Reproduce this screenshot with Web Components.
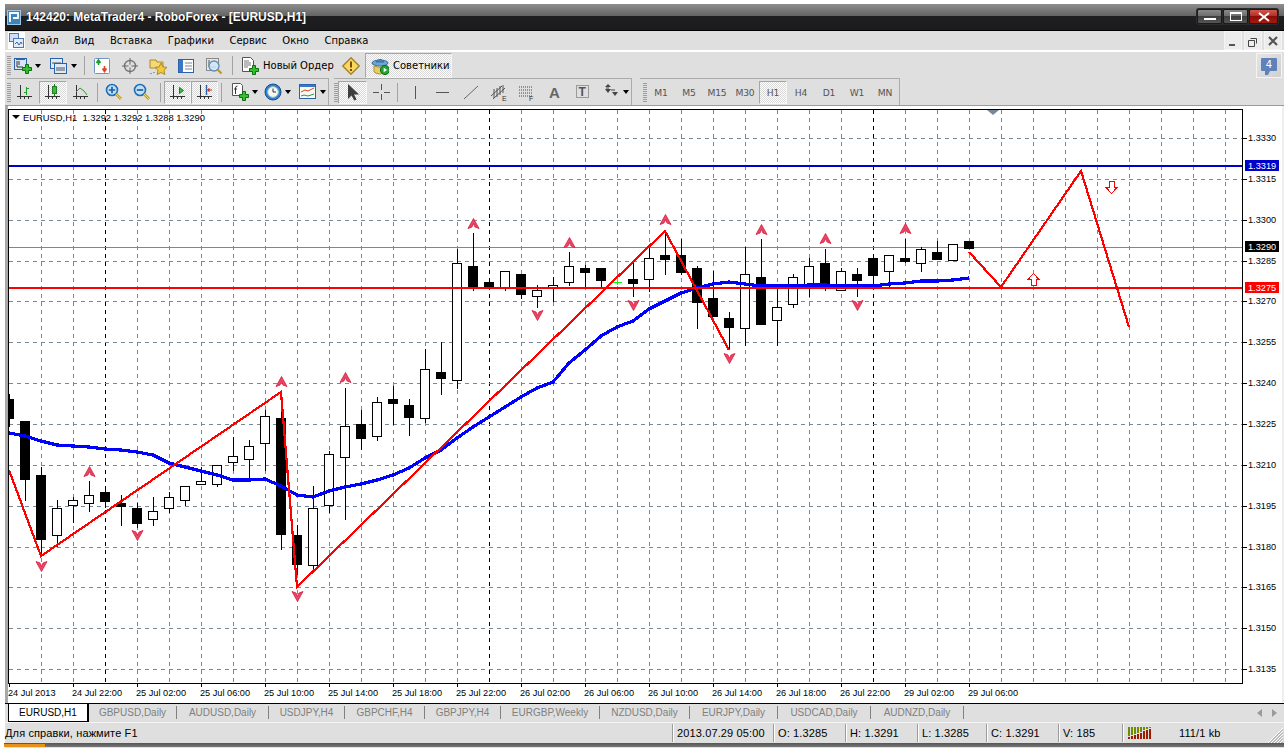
<!DOCTYPE html>
<html>
<head>
<meta charset="utf-8">
<title>MetaTrader4</title>
<style>
  html, body { margin: 0; padding: 0; background: #fff; overflow: hidden; }
  body { font: 11px "Liberation Sans", sans-serif; color: #000; }
</style>
</head>
<body>
<mt-window>
  <mt-titlebar title="142420: MetaTrader4 - RoboForex - [EURUSD,H1]"></mt-titlebar>
  <mt-menubar>
    <span>Файл</span><span>Вид</span><span>Вставка</span><span>Графики</span><span>Сервис</span><span>Окно</span><span>Справка</span>
  </mt-menubar>
  <mt-toolrow top>
    <mt-toolbar>
      <tb-btn w="32" pad="3"><mt-icon name="newchart"></mt-icon><tb-caret></tb-caret></tb-btn>
      <tb-btn w="33" pad="7"><mt-icon name="profiles"></mt-icon><tb-caret></tb-caret></tb-btn>
      <tb-sep w="12" at="8"></tb-sep>
      <tb-btn w="28"><mt-icon name="market"></mt-icon></tb-btn>
      <tb-btn w="28"><mt-icon name="navigator"></mt-icon></tb-btn>
      <tb-btn w="28"><mt-icon name="favorites"></mt-icon></tb-btn>
      <tb-btn w="28"><mt-icon name="terminal"></mt-icon></tb-btn>
      <tb-btn w="28"><mt-icon name="tester"></mt-icon></tb-btn>
      <tb-sep w="8" at="4"></tb-sep>
      <tb-btn w="101" pad="5"><mt-icon name="order"></mt-icon><tb-label>Новый Ордер</tb-label></tb-btn>
      <tb-btn w="28"><mt-icon name="warning"></mt-icon></tb-btn>
      <tb-btn w="87" pad="5" active><mt-icon name="advisor"></mt-icon><tb-label>Советники</tb-label></tb-btn>
    </mt-toolbar>
    <mt-notify count="4"></mt-notify>
  </mt-toolrow>
  <mt-toolrow>
    <mt-toolbar end mr="5">
      <tb-btn w="28"><mt-icon name="bars"></mt-icon></tb-btn>
      <tb-btn w="28" active><mt-icon name="candles"></mt-icon></tb-btn>
      <tb-btn w="28"><mt-icon name="line"></mt-icon></tb-btn>
      <tb-sep w="5" at="2"></tb-sep>
      <tb-btn w="28"><mt-icon name="zoomin"></mt-icon></tb-btn>
      <tb-btn w="28"><mt-icon name="zoomout"></mt-icon></tb-btn>
      <tb-sep w="8" at="4"></tb-sep>
      <tb-btn w="27" active><mt-icon name="shift"></mt-icon></tb-btn>
      <tb-btn w="27" active><mt-icon name="autoscroll"></mt-icon></tb-btn>
      <tb-sep w="8" at="3"></tb-sep>
      <tb-btn w="33" pad="5"><mt-icon name="indicators"></mt-icon><tb-caret></tb-caret></tb-btn>
      <tb-btn w="35" pad="5"><mt-icon name="clock"></mt-icon><tb-caret></tb-caret></tb-btn>
      <tb-btn w="34" pad="5"><mt-icon name="template"></mt-icon><tb-caret></tb-caret></tb-btn>
    </mt-toolbar>
    <mt-toolbar end mr="8">
      <tb-btn w="29" active><mt-icon name="cursor"></mt-icon></tb-btn>
      <tb-btn w="28"><mt-icon name="cross"></mt-icon></tb-btn>
      <tb-sep w="6" at="2"></tb-sep>
      <tb-btn w="28"><mt-icon name="vline"></mt-icon></tb-btn>
      <tb-btn w="28"><mt-icon name="hline"></mt-icon></tb-btn>
      <tb-btn w="28"><mt-icon name="trend"></mt-icon></tb-btn>
      <tb-btn w="28"><mt-icon name="channel"></mt-icon></tb-btn>
      <tb-btn w="28"><mt-icon name="fibo"></mt-icon></tb-btn>
      <tb-btn w="28"><mt-icon name="text"></mt-icon></tb-btn>
      <tb-btn w="28"><mt-icon name="label"></mt-icon></tb-btn>
      <tb-btn w="34" pad="5"><mt-icon name="arrows"></mt-icon><tb-caret></tb-caret></tb-btn>
    </mt-toolbar>
    <mt-toolbar end ml="3">
      <tb-btn w="28" tf>M1</tb-btn><tb-btn w="28" tf>M5</tb-btn><tb-btn w="28" tf>M15</tb-btn><tb-btn w="28" tf>M30</tb-btn>
      <tb-btn w="28" tf active>H1</tb-btn><tb-btn w="28" tf>H4</tb-btn><tb-btn w="28" tf>D1</tb-btn><tb-btn w="28" tf>W1</tb-btn><tb-btn w="28" tf>MN</tb-btn>
    </mt-toolbar>
  </mt-toolrow>
  <mt-chart></mt-chart>
  <mt-tabs>
    <mt-tab active w="81">EURUSD,H1</mt-tab>
    <mt-tab w="88">GBPUSD,Daily</mt-tab>
    <mt-tab w="92">AUDUSD,Daily</mt-tab>
    <mt-tab w="76">USDJPY,H4</mt-tab>
    <mt-tab w="80">GBPCHF,H4</mt-tab>
    <mt-tab w="76">GBPJPY,H4</mt-tab>
    <mt-tab w="99">EURGBP,Weekly</mt-tab>
    <mt-tab w="90">NZDUSD,Daily</mt-tab>
    <mt-tab w="88">EURJPY,Daily</mt-tab>
    <mt-tab w="93">USDCAD,Daily</mt-tab>
    <mt-tab w="93">AUDNZD,Daily</mt-tab>
  </mt-tabs>
  <mt-status>
    <mt-cell grow>Для справки, нажмите F1</mt-cell>
    <mt-cell w="101" sep>2013.07.29 05:00</mt-cell>
    <mt-cell w="72" sep>O: 1.3285</mt-cell>
    <mt-cell w="72" sep>H: 1.3291</mt-cell>
    <mt-cell w="69" sep>L: 1.3285</mt-cell>
    <mt-cell w="72" sep>C: 1.3291</mt-cell>
    <mt-cell w="64" sep>V: 185</mt-cell>
    <mt-cell w="162" sep><mt-traffic></mt-traffic></mt-cell>
  </mt-status>
</mt-window>

<script>
const UI_FONT = '"DejaVu Sans", sans-serif';
const LATIN_FONT = '"Liberation Sans", sans-serif';

// axes used by the chart type icons
const AXES = `<path d="M4.5 2v14M1 13.5h15" stroke="#333" fill="none"/><path d="M8.5 13v3M12.5 13v3" stroke="#333"/>`;
const PLUS = (x, y) => `<path transform="translate(${x} ${y})" d="M3.5 .5h3v3h3v3h-3v3h-3v-3h-3v-3h3z" fill="#35c02e" stroke="#0d6e12"/>`;
const LENS = (inner) => `<circle cx="7" cy="7" r="5.5" fill="#bfe0f7" stroke="#1f6fb5" stroke-width="1.6"/>${inner}<path d="M11 11l5 5" stroke="#c79a1e" stroke-width="2.6"/><path d="M11 11l5 5" stroke="#f2d766" stroke-width="1"/>`;

const ICONS = {
  newchart: `<rect x=".5" y="1.5" width="12" height="11" fill="#d8e5f7" stroke="#2b62ae"/><path d="M2 2.5h9" stroke="#2b62ae"/><path d="M3 4v6h6M5 4v4" stroke="#333" fill="none"/>${PLUS(8, 7)}`,
  profiles: `<rect x=".5" y="1.5" width="12" height="10" fill="#dfe9f8" stroke="#2b62ae"/><path d="M2 6h9" stroke="#555"/><rect x="4.5" y="6.5" width="12" height="10" fill="#dfe9f8" stroke="#2b62ae"/><path d="M6 11h9M6 13h9" stroke="#555"/>`,
  market: `<rect x="1.5" y="1.5" width="15" height="15" rx="1" fill="#fff" stroke="#6f93c4"/><path d="M5.5 8V4M3.5 6l2-3 2 3" stroke="#1a9c28" stroke-width="1.6" fill="none"/><path d="M11.5 9v5M9.5 11.5l2 3 2-3" stroke="#e0431f" stroke-width="1.6" fill="none"/>`,
  navigator: `<circle cx="9" cy="9" r="5.5" fill="none" stroke="#777" stroke-width="1.4"/><path d="M9 1v16M1 9h16" stroke="#666"/><circle cx="9" cy="9" r="1.6" fill="#dfdfdf"/>`,
  favorites: `<path d="M1 3h6l1 2h6v6H1z" fill="#f6d877" stroke="#a98a2b"/><path d="M2 16v1M5 15v1" stroke="#555"/><path d="M12 6l1.9 3.9 4.1.5-3 2.9.8 4.2-3.8-2-3.8 2 .8-4.2-3-2.9 4.1-.5z" fill="#f4c93a" stroke="#a98a2b"/>`,
  terminal: `<rect x="1.5" y="2.5" width="15" height="13" fill="#fff" stroke="#2b62ae"/><rect x="2" y="3" width="4" height="12" fill="#3a78c6"/><path d="M8 6h7M8 9h7M8 12h7" stroke="#7d8590"/>`,
  tester: `<rect x="1.5" y="1.5" width="12" height="12" fill="#e7e7e7" stroke="#8a8a8a"/><path d="M4 3v7h7" stroke="#555" fill="none"/><circle cx="9" cy="9" r="5" fill="#cfe6f7" fill-opacity=".85" stroke="#5f8fb8" stroke-width="1.3"/><path d="M12.5 12.5l4 4" stroke="#c79a1e" stroke-width="2.4"/>`,
  order: `<path d="M1.5 .5h8l3 3v11h-11z" fill="#fff" stroke="#555"/><path d="M3 4h5M3 6h7M3 8h7M3 10h4" stroke="#777"/>${PLUS(8, 8)}`,
  warning: `<path d="M9 .8L17.2 9 9 17.2.8 9z" fill="#f7d95e" stroke="#a8812a" stroke-width="1.4"/><path d="M9 4.5v6" stroke="#7a4c08" stroke-width="2"/><path d="M9 12v2" stroke="#7a4c08" stroke-width="2"/>`,
  advisor: `<ellipse cx="9" cy="6" rx="8" ry="3" fill="#6aa6d8" stroke="#346e9c"/><path d="M5 5q4-5 8 0z" fill="#4e8cc4" stroke="#346e9c"/><path d="M3 9q6 3 11 0v6q-5 4-11 0z" fill="#e6cf62" stroke="#a8923a"/><circle cx="14" cy="13" r="4.6" fill="#22a52e" stroke="#0f6a16"/><path d="M12.7 10.8v4.4l3.4-2.2z" fill="#fff"/>`,
  bars: `${AXES}<path d="M10.5 4v8M8 9.5h2M11 5.5h2" stroke="#1d9c25" fill="none"/>`,
  candles: `${AXES}<path d="M10.5 1v12" stroke="#1d7c25"/><rect x="8.5" y="3.5" width="4" height="7" fill="#35c02e" stroke="#1d7c25"/>`,
  line: `${AXES}<path d="M4 9l4-4 4 3 3 4" stroke="#2aa032" fill="none"/>`,
  zoomin: LENS(`<path d="M7 3.8v6.4M3.8 7h6.4" stroke="#1f5fa0" stroke-width="1.7"/>`),
  zoomout: LENS(`<path d="M3.8 7h6.4" stroke="#1f5fa0" stroke-width="1.7"/>`),
  shift: `${AXES}<path d="M10.5 4.5v6l4-3z" fill="#35c02e" stroke="#1d7c25"/>`,
  autoscroll: `${AXES}<path d="M10.5 2v10" stroke="#2b62ae" stroke-width="1.4"/><path d="M16 7h-3M13 5.5L11.5 7l1.5 1.5z" stroke="#d3281c" fill="#d3281c"/>`,
  indicators: `<path d="M1.5 .5h8l2 2v10h-10z" fill="#fff" stroke="#555"/><path d="M6.5 3q-2 0-2 2v6M3 6h3" stroke="#333" fill="none"/>${PLUS(8, 8)}`,
  clock: `<circle cx="9" cy="9" r="8" fill="#2f7fd0" stroke="#174f8f"/><circle cx="9" cy="9" r="5.4" fill="#f4f7f2" stroke="#9bb"/><path d="M9 5.5V9h3" stroke="#333" fill="none"/>`,
  template: `<rect x=".5" y="1.5" width="16" height="14" fill="#f8f8f4" stroke="#2b62ae"/><rect x="1" y="2" width="15" height="2" fill="#3a78c6"/><path d="M2 9l4-2 3 1 6-3" stroke="#d3481c" fill="none"/><path d="M2 13l3-1 4 1 6-2" stroke="#2a9c32" fill="none"/>`,
  cursor: `<path d="M4 1v15l3.6-3.4 2.6 5 2.4-1.2-2.6-5h5z" fill="#3d3d3d"/>`,
  cross: `<path d="M9.5 1v6M9.5 11v6M1 9.5h6M12 9.5h6" stroke="#555"/>`,
  vline: `<path d="M9.5 3v13" stroke="#555"/>`,
  hline: `<path d="M2 9.5h13" stroke="#555"/>`,
  trend: `<path d="M2 16L16 3" stroke="#666"/>`,
  channel: `<path d="M1 13L12 3M3 16L15 5M4 6v9M7 5v9M10 3v9M13 2v8" stroke="#555"/><text x="12" y="18" font-size="7" font-family="Liberation Sans" fill="#333">E</text>`,
  fibo: `<path d="M1 4h13M1 7h13M1 10h13M1 13h13" stroke="#444" stroke-dasharray="1 1"/><text x="11" y="18" font-size="7" font-family="Liberation Sans" fill="#333">F</text>`,
  text: `<text x="3" y="15" font-size="15" font-weight="bold" font-family="Liberation Sans" fill="#666">A</text>`,
  label: `<rect x="2.5" y="2.5" width="12" height="12" fill="none" stroke="#555" stroke-dasharray="1 1"/><text x="4.5" y="13" font-size="12" font-weight="bold" font-family="Liberation Sans" fill="#555">T</text>`,
  arrows: `<path d="M6 1l3 3H3zM3 6l3 4 3-4" fill="#444"/><path d="M10 9h6l-3 4z" fill="#444"/><path d="M4 5h3M9 7h4" stroke="#444"/>`
};

class MtWindow extends HTMLElement {
  connectedCallback() {
    this.attachShadow({ mode: "open" });
    this.shadowRoot.innerHTML = `
      <style>
        :host { display: flex; flex-direction: column; margin: 4px 4px 0 5px; height: 744px; background: #dfdfdf; font-family: ${UI_FONT}; font-size: 10px; }
        .foot { display: flex; height: 4px; background: linear-gradient(#555, #777); margin-left: -1px; }
        .foot i { display: block; width: 41px; height: 3px; background: #e8901a; margin-top: 1px; }
      </style>
      <slot></slot>
      <div class="foot"><i></i></div>
    `;
  }
}

class MtTitlebar extends HTMLElement {
  connectedCallback() {
    this.attachShadow({ mode: "open" });
    const title = this.getAttribute("title") || "";
    this.removeAttribute("title");
    this.shadowRoot.innerHTML = `
      <style>
        :host { display: flex; align-items: center; height: 26px; border-bottom: 1px solid #000; padding: 0 5px 0 2px; gap: 5px;
          background: linear-gradient(#8e8e8e, #636363 46%, #1f1f21 46%, #1b1b1d); color: #fff; }
        .logo { width: 14px; height: 15px; }
        .text { font: bold 12px "Liberation Sans", sans-serif; text-shadow: 0 0 1px #000; flex: 1; }
        .btns { display: flex; gap: 1px; padding: 1px; margin-top: -1px; background: #2a2a2a; border-radius: 3px; }
        .b { width: 23px; height: 13px; display: flex; align-items: center; justify-content: center; border-radius: 2px; background: linear-gradient(#8a8a8a, #6b6b6b 50%, #3f3f3f 50%, #555); border: 1px solid #1a1a1a; }
        .close { width: 27px; background: linear-gradient(#cc5a50, #b32a20 50%, #8a0d08 50%, #a81a10); }
      </style>
      <svg class="logo" viewBox="0 0 14 15"><rect width="14" height="15" fill="#3f84b8"/><rect x=".5" y=".5" width="13" height="14" fill="none" stroke="#9cc6e4"/><path d="M3 12V3h8v5H6" fill="none" stroke="#fff" stroke-width="1.8"/></svg>
      <div class="text">${title}</div>
      <div class="btns">
        <div class="b"><svg width="14" height="9"><rect x="1" y="6" width="12" height="2" fill="#fff"/></svg></div>
        <div class="b"><svg width="14" height="9"><rect x="1.5" y=".5" width="11" height="8" fill="none" stroke="#fff"/><rect x="1" y="0" width="12" height="2" fill="#fff"/></svg></div>
        <div class="b close"><svg width="14" height="10"><path d="M2 1l10 8M12 1L2 9" stroke="#fff" stroke-width="2"/></svg></div>
      </div>
    `;
  }
}

class MtMenubar extends HTMLElement {
  connectedCallback() {
    this.attachShadow({ mode: "open" });
    this.shadowRoot.innerHTML = `
      <style>
        :host { display: flex; align-items: center; height: 19px; padding: 0 2px 0 3px; border-bottom: 2px solid #fff; background: #dfdfdf; }
        .doc { width: 17px; height: 17px; margin-right: 6px; }
        .items { display: flex; gap: 15.5px; flex: 1; }
        ::slotted(span) { font-size: 10px; }
        .ctl { display: flex; gap: 2px; }
        .ctl div { width: 16px; height: 17px; background: #ececec; border: 1px solid #f4f4f4; display: flex; align-items: center; justify-content: center; }
      </style>
      <svg class="doc" viewBox="0 0 17 17"><rect width="17" height="17" fill="#fff"/><rect x="1.5" y="1.5" width="9" height="8" fill="#cfdff5" stroke="#4a78b8"/><rect x="5.5" y="6.5" width="10" height="9" fill="#e3edfa" stroke="#4a78b8"/><path d="M7 12l2-2 2 3 2-3 1 2" stroke="#3a5fa0" fill="none"/></svg>
      <div class="items"><slot></slot></div>
      <div class="ctl">
        <div><svg width="12" height="12"><rect x="2" y="9" width="6" height="2" fill="#555"/></svg></div>
        <div><svg width="12" height="12"><path d="M3.5 3.5h6v5M1.5 5.5h6v6h-6z" fill="none" stroke="#444"/></svg></div>
        <div><svg width="12" height="12"><path d="M2 2l8 8M10 2l-8 8" stroke="#555" stroke-width="2.2"/></svg></div>
      </div>
    `;
  }
}

class MtToolrow extends HTMLElement {
  connectedCallback() {
    this.attachShadow({ mode: "open" });
    const top = this.hasAttribute("top");
    this.shadowRoot.innerHTML = `
      <style>
        :host { display: flex; height: ${top ? 26 : 28}px; padding: 0 2px; background: #dfdfdf; box-sizing: border-box; --btn-h: ${top ? 25 : 23}px; ${top ? "" : "border-bottom: 1px solid #9b9b9b;"} }
      </style>
      <slot></slot>
    `;
  }
}

class MtToolbar extends HTMLElement {
  connectedCallback() {
    this.attachShadow({ mode: "open" });
    const end = this.hasAttribute("end");
    const mr = this.getAttribute("mr") || 0;
    const ml = this.getAttribute("ml") || 0;
    this.shadowRoot.innerHTML = `
      <style>
        :host { display: flex; align-items: center; height: 100%; box-sizing: border-box; padding-top: ${end ? 0 : 1}px; margin-right: ${mr}px; ${end ? "border-top: 1px solid #ababab; border-right: 1px solid #ababab;" : ""} }
        .grip { width: 4px; height: 19px; margin-left: ${ml}px; background: repeating-linear-gradient(#9d9d9d 0 1px, #dfdfdf 1px 2px); }
      </style>
      <div class="grip"></div>
      <slot></slot>
    `;
  }
}

class TbBtn extends HTMLElement {
  connectedCallback() {
    this.attachShadow({ mode: "open" });
    const w = this.getAttribute("w") || 28;
    const pad = this.getAttribute("pad");
    const active = this.hasAttribute("active");
    this.shadowRoot.innerHTML = `
      <style>
        :host { display: flex; align-items: center; justify-content: ${pad ? "flex-start" : "center"}; width: ${w}px; height: var(--btn-h); box-sizing: border-box; ${pad ? `padding-left: ${pad}px;` : ""}
          ${this.hasAttribute("tf") ? "color: #555; font-size: 9.2px; letter-spacing: -.2px;" : ""}
          ${active ? "background: repeating-conic-gradient(#fff 0 25%, #d8d8d8 0 50%) 0 0/2px 2px; border: 1px solid; border-color: #a6a6a6 #f6f6f6 #f6f6f6 #a6a6a6;" : ""} }
      </style>
      <slot></slot>
    `;
  }
}

class TbSep extends HTMLElement {
  connectedCallback() {
    this.attachShadow({ mode: "open" });
    const w = this.getAttribute("w") || 8;
    const at = this.getAttribute("at") || 4;
    this.shadowRoot.innerHTML = `
      <style>
        :host { display: block; width: ${w}px; height: 19px; flex: none; }
        div { width: 1px; height: 19px; margin-left: ${at}px; background: #a3a3a3; }
      </style>
      <div></div>
    `;
  }
}

class TbCaret extends HTMLElement {
  connectedCallback() {
    this.attachShadow({ mode: "open" });
    this.shadowRoot.innerHTML = `
      <style>:host { display: block; margin-left: 3px; width: 0; height: 0; border: 3.5px solid transparent; border-top: 4px solid #000; border-bottom: 0; }</style>
    `;
  }
}

class TbLabel extends HTMLElement {
  connectedCallback() {
    this.attachShadow({ mode: "open" });
    this.shadowRoot.innerHTML = `
      <style>:host { display: block; margin-left: 4px; font-size: 10px; white-space: nowrap; }</style>
      <slot></slot>
    `;
  }
}

class MtIcon extends HTMLElement {
  connectedCallback() {
    this.attachShadow({ mode: "open" });
    const name = this.getAttribute("name");
    this.shadowRoot.innerHTML = `
      <style>:host { display: block; width: 18px; height: 18px; flex: none; } svg { display: block; }</style>
      <svg width="18" height="18" viewBox="0 0 18 18">${ICONS[name] || ""}</svg>
    `;
  }
}

class MtNotify extends HTMLElement {
  connectedCallback() {
    this.attachShadow({ mode: "open" });
    const count = this.getAttribute("count");
    this.shadowRoot.innerHTML = `
      <style>
        :host { display: block; margin: 1px 0 0 auto; width: 26px; height: 25px; box-sizing: border-box; border: 1px solid #f4f4f4; background: linear-gradient(135deg, #e4e4e4, #d0d0d0); }
        .bubble { margin: 4px 0 0 4px; width: 16px; height: 13px; background: #5f82bd; border-radius: 1px; color: #fff; font-size: 10px; line-height: 13px; text-align: center; position: relative; }
        .bubble::after { content: ""; position: absolute; left: 4px; bottom: -4px; border: 2px solid transparent; border-top: 4px solid #5f82bd; border-left: 3px solid #5f82bd; border-bottom: 0; }
      </style>
      <div class="bubble">${count}</div>
    `;
  }
}

// centre x, wick top, wick bottom, body top, body bottom, black?
const CANDLES = [
  [9,394,427,399,418,1],[25,421,501,421,479,1],[41,467,557,475,539,1],[57,500,547,508,535,0],[73,497,523,500,505,0],
  [89,481,512,495,503,0],[105,487,508,492,501,1],[121,495,526,503,506,1],[137,503,528,508,523,1],[153,497,526,511,519,0],
  [169,492,513,497,508,0],[185,486,506,486,500,0],[201,467,485,481,484,0],[217,465,487,465,484,0],[233,437,471,456,462,0],
  [249,440,480,446,459,0],[265,410,471,416,443,0],[281,403,550,418,534,1],[297,525,575,535,564,1],[313,486,572,508,565,0],
  [329,451,513,454,505,0],[345,388,520,426,457,0],[361,410,450,424,438,1],[377,397,441,402,436,0],[393,386,425,399,403,1],
  [409,399,436,405,417,1],[425,349,423,369,418,0],[441,342,395,372,378,1],[457,249,389,263,380,0],[473,233,291,266,286,1],
  [489,282,286,282,286,1],[505,271,291,271,288,0],[521,274,299,274,294,1],[537,285,308,290,296,0],[553,277,302,285,288,0],
  [569,252,286,266,282,0],[585,265,288,268,272,1],[601,268,288,268,280,1],[633,261,297,279,283,1],[649,247,292,258,279,0],
  [665,231,275,255,259,1],[681,239,275,255,272,1],[697,266,329,268,302,1],[713,271,316,298,316,1],[729,312,350,318,327,1],
  [745,247,346,274,328,0],[761,239,324,277,324,1],[777,288,346,307,320,0],[793,274,308,277,304,0],[809,258,297,266,285,0],
  [825,249,291,263,285,1],[841,268,290,271,290,0],[857,268,297,274,280,1],[873,258,288,258,275,1],[889,255,287,255,271,0],
  [905,239,263,258,261,1],[921,247,272,249,263,0],[937,241,260,252,259,1],[953,244,260,244,260,0],[969,241,248,241,248,1]
];
const MA = [[9,433],[25,436],[41,441],[57,445],[73,446],[89,447],[105,449],[121,450],[137,452],[153,455],[169,463],[185,467],[201,471],[217,475],[233,480],[249,480],[265,479],[281,486],[297,495],[313,497],[329,491],[345,487],[361,484],[377,480],[393,475],[409,468],[425,458],[441,450],[457,438],[473,427],[489,417],[505,407],[521,397],[537,388],[553,382],[569,363],[585,350],[601,336],[617,327],[633,321],[649,309],[665,301],[681,293],[697,288],[713,284],[729,282],[745,284],[761,286],[777,286],[793,286],[809,285],[825,285],[841,286],[857,286],[873,286],[889,284],[905,283],[921,281],[937,281],[953,280],[969,278]];
const ZIG1 = [[9,470],[41,556],[281,392],[297,587],[665,231],[729,350]];
const ZIG2 = [[969,252],[1001,287],[1081,171],[1129,327]];
const UPS = [[89,472],[281,382],[345,378],[473,224],[569,243],[665,220],[761,230],[825,239],[905,229]];
const DOWNS = [[41,566],[137,535],[297,596],[537,315],[633,305],[729,358],[857,305]];
const X_LABELS = ["24 Jul 2013","24 Jul 22:00","25 Jul 02:00","25 Jul 06:00","25 Jul 10:00","25 Jul 14:00","25 Jul 18:00","25 Jul 22:00","26 Jul 02:00","26 Jul 06:00","26 Jul 10:00","26 Jul 14:00","26 Jul 18:00","26 Jul 22:00","29 Jul 02:00","29 Jul 06:00"];

class MtChart extends HTMLElement {
  connectedCallback() {
    this.attachShadow({ mode: "open" });
    this.render();
  }

  render() {
    let grid = "";
    for (let x = 41; x < 1242; x += 32) {
      const day = x === 105 || x === 489 || x === 873;
      grid += `<path d="M${x + .5} 110V683" stroke="${day ? "#000" : "#778899"}" stroke-dasharray="4 4"/>`;
    }
    let axisY = "";
    for (let i = 0; i < 14; i++) {
      const y = Math.round(138 + i * 40.85);
      const price = (1.333 - i * 0.0015).toFixed(4);
      grid += `<path d="M9 ${y + .5}H1242" stroke="#778899" stroke-dasharray="4 4"/>`;
      axisY += `<path d="M1243 ${y + .5}h4" stroke="#000"/><text x="1248" y="${y + 3}">${price}</text>`;
    }
    let axisX = "";
    X_LABELS.forEach((t, i) => {
      const x = 9 + i * 64;
      axisX += `<path d="M${x + .5} 684v3" stroke="#000"/><text x="${x - 1}" y="695.5">${t}</text>`;
    });
    let candles = "";
    for (const [x, hi, lo, top, bot, black] of CANDLES) {
      candles += `<path d="M${x + .5} ${hi}V${lo}" stroke="#000"/>`;
      const left = Math.max(x - 4.5, 8.5);
      candles += `<rect x="${left}" y="${top + .5}" width="${x + 4.5 - left}" height="${bot - top}" fill="${black ? "#000" : "#fff"}" stroke="#000"/>`;
    }
    const poly = (pts, color, w) => `<polyline points="${pts.map(p => p.join(",")).join(" ")}" fill="none" stroke="${color}" stroke-width="${w}"/>`;
    const up = ([x, y]) => `<path transform="translate(${x + .5} ${y})" d="M0-5.5L5.5 4.5 1.5 3 0-.5-1.5 3-5.5 4.5z" fill="#e54a67" stroke="#dc143c" stroke-width=".8"/>`;
    const down = ([x, y]) => `<path transform="translate(${x + .5} ${y})" d="M0 5.5L5.5-4.5 1.5-3 0 .5-1.5-3-5.5-4.5z" fill="#e54a67" stroke="#dc143c" stroke-width=".8"/>`;
    const price = (y, t, bg) => `<rect x="1245" y="${y}" width="34" height="11" fill="${bg}"/><text x="1248" y="${y + 9}" fill="#fff">${t}</text>`;

    this.shadowRoot.innerHTML = `
      <style>
        :host { display: block; height: 597px; background: #fff; }
        svg { display: block; }
        text { font: 9.2px ${LATIN_FONT}; white-space: pre; }
        .legend { font-size: 9.4px; }
      </style>
      <svg width="1279" height="597" viewBox="5 106 1279 597">
        <rect x="5" y="106" width="3" height="597" fill="#a8a8a8"/>
        <rect x="1282" y="106" width="2" height="597" fill="#eeeeee"/>
        <g shape-rendering="crispEdges">
          ${grid}
          <path d="M9 247.5H1242" stroke="#778899"/>
          ${candles}
          <path d="M617.5 260V285M613 282.5H622" stroke="#00ff00"/>
        </g>
        <g shape-rendering="crispEdges">
          <path d="M9 166H1242" stroke="#0000cd" stroke-width="2"/>
          ${poly(MA, "#0000ff", 3.2)}
          <path d="M9 288H1242" stroke="#ff0000" stroke-width="2"/>
          ${poly(ZIG1, "#ff0000", 2.2)}
          ${poly(ZIG2, "#ff0000", 2.2)}
          <path d="M1033.5 273.5l5.5 6h-3v6h-5v-6h-3z" fill="#fff" stroke="#ff0000"/>
          <path d="M1111.5 193.5l5.5-6h-3v-6h-5v6h-3z" fill="#fff" stroke="#ff0000"/>
        </g>
        ${UPS.map(up).join("")}
        ${DOWNS.map(down).join("")}
        <path d="M987 110h12l-6 5z" fill="#778899"/>
        <g shape-rendering="crispEdges" fill="none">
          <rect x="8.5" y="109.5" width="1234" height="574" stroke="#000"/>
        </g>
        ${axisY}
        ${axisX}
        ${price(160, "1.3319", "#0000cd")}
        ${price(241, "1.3290", "#000")}
        ${price(282, "1.3275", "#ff0000")}
        <path d="M12 115h8l-4 4z" fill="#000"/>
        <text class="legend" x="23" y="120.5">EURUSD,H1  1.3292 1.3292 1.3288 1.3290</text>
      </svg>
    `;
  }
}

class MtTabs extends HTMLElement {
  connectedCallback() {
    this.attachShadow({ mode: "open" });
    this.shadowRoot.innerHTML = `
      <style>
        :host { display: flex; height: 20px; box-sizing: border-box; border-top: 1px solid #000; padding-left: 3px; background: #dfdfdf; border-bottom: 1px solid #f4f4f4; }
        .arrows { margin-left: auto; display: flex; gap: 9px; align-items: center; padding: 0 6px 0 0; }
      </style>
      <slot></slot>
      <div class="arrows">
        <svg width="6" height="8"><path d="M0 4l5-4v8z" fill="#9a9a9a"/></svg>
        <svg width="6" height="8"><path d="M5 4L0 0v8z" fill="#9a9a9a"/></svg>
      </div>
    `;
  }
}

class MtTab extends HTMLElement {
  connectedCallback() {
    this.attachShadow({ mode: "open" });
    const w = this.getAttribute("w");
    const active = this.hasAttribute("active");
    this.shadowRoot.innerHTML = `
      <style>
        :host { display: flex; align-items: center; justify-content: center; width: ${w}px; box-sizing: border-box; white-space: nowrap; font: 10px ${LATIN_FONT};
          ${active
            ? "background: #fff; color: #000; border-left: 1px solid #000; border-right: 2px solid #000; border-bottom: 1px solid #000; height: 18px;"
            : "color: #808080; margin: 2px 0 3px; border-right: 1px solid #808080;"} }
      </style>
      <slot></slot>
    `;
  }
}

class MtStatus extends HTMLElement {
  connectedCallback() {
    this.attachShadow({ mode: "open" });
    this.shadowRoot.innerHTML = `
      <style>
        :host { display: flex; height: 20px; align-items: center; background: #dfdfdf; position: relative; }
        .grip { position: absolute; right: 0; bottom: 0; }
      </style>
      <slot></slot>
      <svg class="grip" width="16" height="15"><path d="M15 0L0 15M15 3L3 15M15 6L6 15M15 9L9 15M15 12L12 15" stroke="#fff"/><path d="M15 1.5L1.5 15M15 4.5L4.5 15M15 7.5L7.5 15M15 10.5L10.5 15M15 13.5L13.5 15" stroke="#999"/></svg>
    `;
  }
}

class MtCell extends HTMLElement {
  connectedCallback() {
    this.attachShadow({ mode: "open" });
    const w = this.getAttribute("w");
    const sep = this.hasAttribute("sep");
    this.shadowRoot.innerHTML = `
      <style>
        :host { display: flex; align-items: center; height: 18px; box-sizing: border-box; white-space: nowrap; font: 11px ${LATIN_FONT}; letter-spacing: .13px;
          ${w ? `width: ${w}px;` : "flex: 1;"}
          ${sep ? "border-left: 1px solid #9b9b9b; box-shadow: inset 1px 0 #fff; padding-left: 4px;" : ""} }
      </style>
      <slot></slot>
    `;
  }
}

class MtTraffic extends HTMLElement {
  connectedCallback() {
    this.attachShadow({ mode: "open" });
    let bars = "";
    for (let i = 0; i < 8; i++) {
      const x = i * 3;
      const edge = 10 - Math.round(i * 1.1);
      bars += `<rect x="${x}" y="0" width="2" height="${edge - 1}" fill="#6f8c00"/>`;
      bars += `<rect x="${x}" y="${edge}" width="2" height="${12 - edge}" fill="#a01c00"/>`;
    }
    this.shadowRoot.innerHTML = `
      <style>
        :host { display: flex; align-items: center; width: 100%; }
        svg { flex: none; margin-left: 1px; }
        span { margin-left: 27px; }
      </style>
      <svg width="24" height="12">${bars}</svg>
      <span>111/1 kb</span>
    `;
  }
}

customElements.define("mt-window", MtWindow);
customElements.define("mt-titlebar", MtTitlebar);
customElements.define("mt-menubar", MtMenubar);
customElements.define("mt-toolrow", MtToolrow);
customElements.define("mt-toolbar", MtToolbar);
customElements.define("tb-btn", TbBtn);
customElements.define("tb-sep", TbSep);
customElements.define("tb-caret", TbCaret);
customElements.define("tb-label", TbLabel);
customElements.define("mt-icon", MtIcon);
customElements.define("mt-notify", MtNotify);
customElements.define("mt-chart", MtChart);
customElements.define("mt-tabs", MtTabs);
customElements.define("mt-tab", MtTab);
customElements.define("mt-status", MtStatus);
customElements.define("mt-cell", MtCell);
customElements.define("mt-traffic", MtTraffic);
</script>
</body>
</html>
